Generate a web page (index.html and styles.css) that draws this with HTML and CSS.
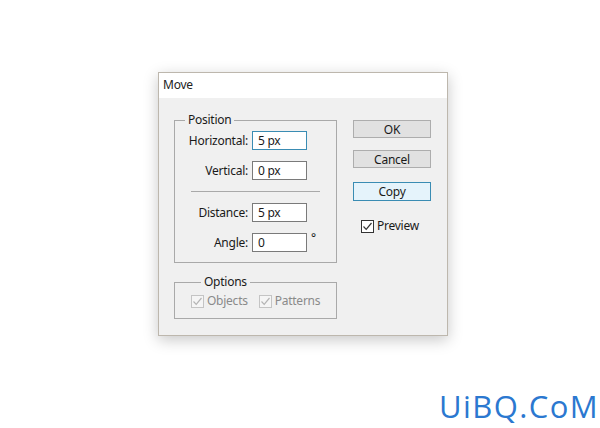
FILE: index.html
```html
<!DOCTYPE html>
<html>
<head>
<meta charset="utf-8">
<link rel="stylesheet" href="styles.css">
</head>
<body>
<div class="page">
  <div class="dialog">
    <div class="titlebar">Move</div>
    <div class="body">
      <div class="leftcol">
        <fieldset class="group position">
          <legend>Position</legend>
          <div class="grid">
            <label class="lbl">Horizontal:</label>
            <div class="input focus">5 px</div>
            <span></span>
            <label class="lbl">Vertical:</label>
            <div class="input">0 px</div>
            <span></span>
            <div class="sep"></div>
            <label class="lbl">Distance:</label>
            <div class="input">5 px</div>
            <span></span>
            <label class="lbl">Angle:</label>
            <div class="input">0</div>
            <span class="deg">°</span>
          </div>
        </fieldset>
        <fieldset class="group options">
          <legend>Options</legend>
          <div class="checks">
            <span class="check disabled"><span class="box"><svg viewBox="0 0 13 13" width="13" height="13"><path d="M2.5 6.5 L5.2 9.3 L10.5 3" fill="none" stroke="#b4b4b4" stroke-width="1.2"/></svg></span>Objects</span>
            <span class="check disabled"><span class="box"><svg viewBox="0 0 13 13" width="13" height="13"><path d="M2.5 6.5 L5.2 9.3 L10.5 3" fill="none" stroke="#b4b4b4" stroke-width="1.2"/></svg></span>Patterns</span>
          </div>
        </fieldset>
      </div>
      <div class="rightcol">
        <button class="btn">OK</button>
        <button class="btn">Cancel</button>
        <button class="btn default">Copy</button>
        <span class="check preview"><span class="box"><svg viewBox="0 0 13 13" width="13" height="13"><path d="M2.5 6.5 L5.2 9.3 L10.5 3" fill="none" stroke="#333" stroke-width="1.2"/></svg></span>Preview</span>
      </div>
    </div>
  </div>
  <div class="watermark">UiBQ.CoM</div>
</div>
</body>
</html>
```

FILE: styles.css
```css
html, body {
  margin: 0;
  padding: 0;
  background: #ffffff;
}
.page {
  width: 600px;
  height: 428px;
  display: flex;
  flex-direction: column;
  font-family: "Noto Sans", "Open Sans", sans-serif;
  font-size: 12px;
  letter-spacing: -0.25px;
  color: #1a1a1a;
}
.dialog {
  margin: 72px 0 0 158px;
  width: 288px;
  height: 262px;
  border: 1px solid #bdb7ad;
  background: #f0f0f0;
  box-shadow: 0 4px 14px rgba(0,0,0,0.22);
  display: flex;
  flex-direction: column;
}
.titlebar {
  height: 25px;
  background: #ffffff;
  line-height: 24px;
  padding-left: 4px;
  color: #222;
}
.body {
  display: flex;
  padding: 15px 0 0 15px;
}
.leftcol {
  width: 163px;
  display: flex;
  flex-direction: column;
}
.group {
  margin: 0;
  border: 1px solid #a9a9a9;
  padding: 0;
  min-width: 0;
}
.group legend {
  margin-left: 10px;
  padding: 0 3px;
  line-height: 14px;
  font-size: 12px;
  color: #1a1a1a;
}
.position {
  padding: 4px 0 10px 0;
}
.grid {
  display: grid;
  grid-template-columns: 73px 55px 20px;
  column-gap: 4px;
  row-gap: 11px;
  align-items: center;
}
.lbl {
  text-align: right;
  line-height: 19px;
}
.input {
  height: 17px;
  border: 1px solid #7a7a7a;
  background: #ffffff;
  line-height: 17px;
  padding-left: 5px;
  box-sizing: content-box;
  width: 48px;
}
.input.focus {
  border-color: #3a8cb3;
}
.deg {
  align-self: start;
  line-height: 12px;
  margin-top: -1px;
}
.sep {
  grid-column: 1 / 4;
  height: 1px;
  background: #a9a9a9;
  margin-left: 16px;
  width: 129px;
}
.options {
  margin-top: 12px;
  padding: 5px 0 10px 16px;
}
.checks {
  display: flex;
  gap: 11px;
}
.check {
  display: inline-flex;
  align-items: center;
  gap: 3px;
  line-height: 14px;
}
.box {
  width: 11px;
  height: 11px;
  border: 1px solid #333;
  background: #fff;
  display: inline-flex;
}
.box svg {
  margin: -1px;
}
.disabled {
  color: #8a8a8a;
}
.disabled .box {
  border-color: #c4c4c4;
  background: #f5f5f5;
}
.rightcol {
  display: flex;
  flex-direction: column;
  margin-left: 16px;
  margin-top: 7px;
  width: 78px;
}
.btn {
  width: 78px;
  height: 18px;
  margin: 0 0 12px 0;
  padding: 0;
  border: 1px solid #adadad;
  background: #e1e1e1;
  font-family: "Noto Sans", "Open Sans", sans-serif;
  font-size: 12px;
  letter-spacing: -0.25px;
  line-height: 15px;
  color: #1a1a1a;
}
.btn.default {
  height: 19px;
  margin-top: 2px;
  border-color: #3a8cb3;
  background: #e5f3fb;
}
.preview {
  margin-top: 6px;
  margin-left: 8px;
}
.watermark {
  align-self: flex-end;
  margin-top: 53px;
  margin-right: 1px;
  font-family: "Open Sans", "DejaVu Sans", sans-serif;
  font-size: 31px;
  line-height: 34px;
  color: #2b78d0;
  letter-spacing: 1.4px;
}
```
